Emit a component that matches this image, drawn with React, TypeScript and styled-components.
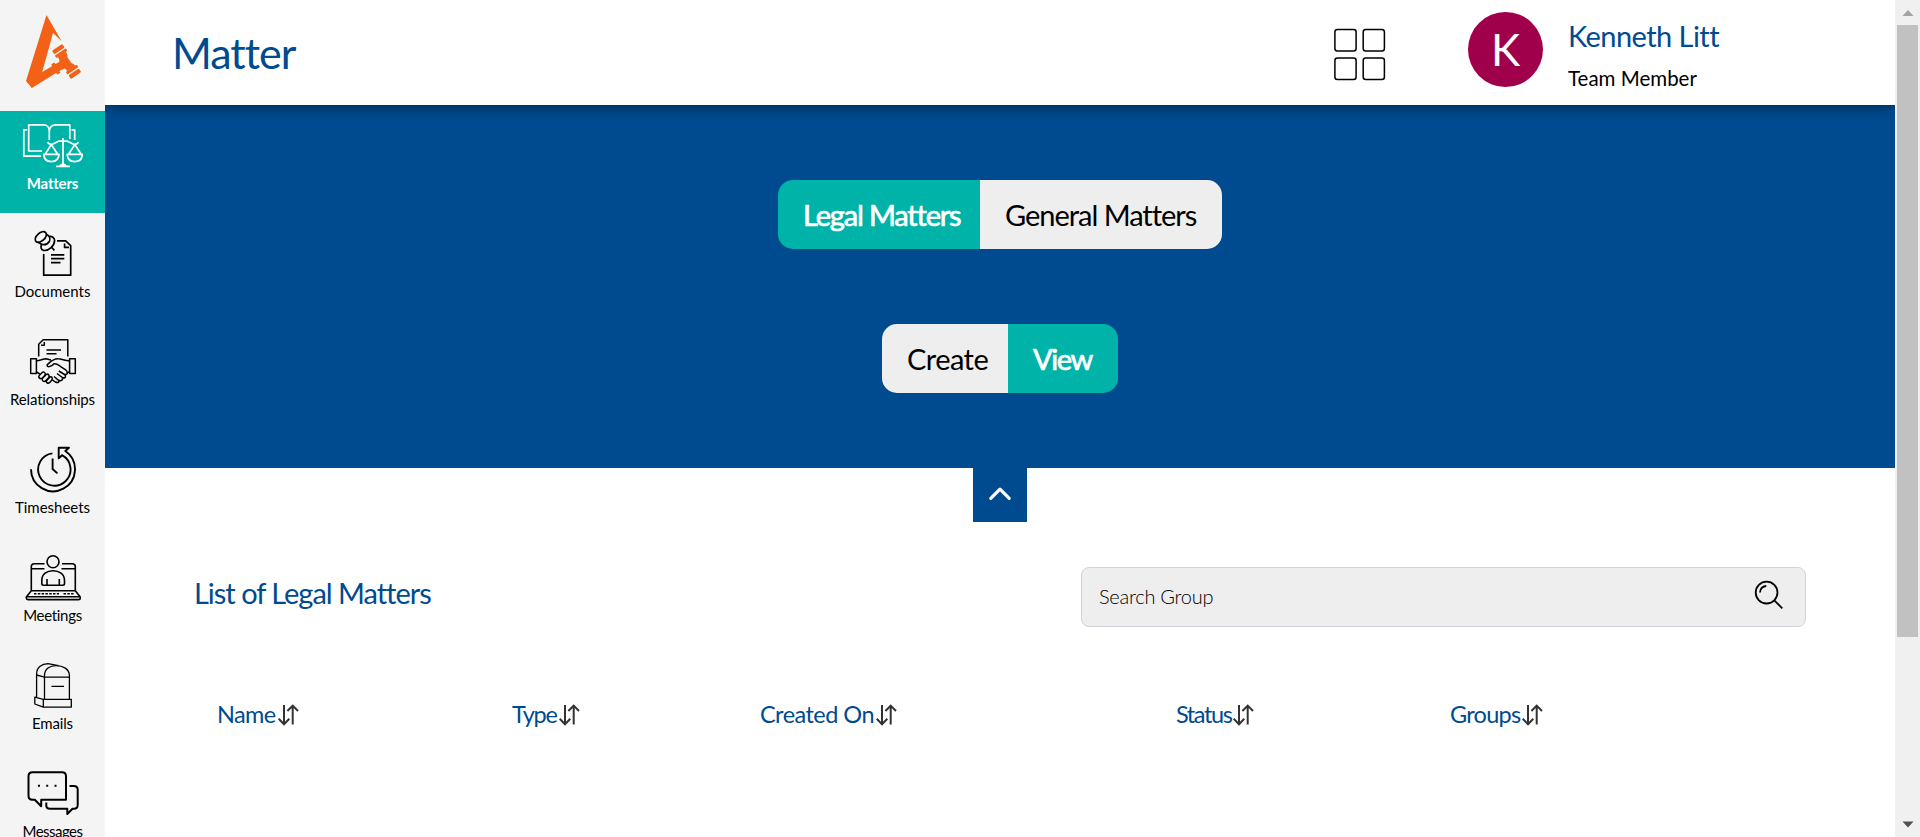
import React from "react";
import styled, { createGlobalStyle, css } from "styled-components";

const NAVY = "#004a8f";
const TEAL = "#00b3a8";

const GlobalStyle = createGlobalStyle`
  * { box-sizing: border-box; }
  body {
    margin: 0;
    background: #fff;
    font-family: Lato, "Open Sans", sans-serif;
    color: #000;
    overflow: hidden;
  }
  svg { display: block; flex: none; }
`;

/* ---------- shell ---------- */

const Shell = styled.div`
  display: flex;
  width: 100%;
  height: 837px;
  overflow: hidden;
`;

const Sidebar = styled.nav`
  flex: none;
  width: 105px;
  background: #f4f4f4;
  overflow: hidden;
`;

const LogoBox = styled.div`
  height: 111px;
  padding: 10px 0 0 20px;
`;

const NavList = styled.div`
  display: flex;
  flex-direction: column;
  gap: 6px;
`;

const NavItem = styled.a<{ $active?: boolean }>`
  display: flex;
  flex: none;
  flex-direction: column;
  align-items: center;
  gap: 2px;
  height: 102px;
  padding-top: 10px;
  color: ${(p) => (p.$active ? "#fff" : "#000")};
  background: ${(p) => (p.$active ? TEAL : "transparent")};
`;

const NavLabel = styled.span<{ $spacing: number; $bold?: boolean }>`
  font-size: 15px;
  line-height: 20px;
  font-weight: ${(p) => (p.$bold ? 700 : 400)};
  letter-spacing: ${(p) => p.$spacing}px;
  white-space: nowrap;
`;

const Main = styled.main`
  flex: 1;
  min-width: 0;
  display: flex;
  flex-direction: column;
`;

/* ---------- header ---------- */

const Header = styled.header`
  position: relative;
  flex: none;
  display: flex;
  height: 105px;
  padding: 0 176px 0 67px;
  background: #fff;
  box-shadow: 0 3px 12px rgba(0, 0, 0, 0.4);
  clip-path: inset(0 0 -16px 0);
`;

const PageTitle = styled.h1`
  flex: 1;
  margin: 0;
  font-size: 43px;
  line-height: 105px;
  font-weight: 400;
  letter-spacing: -1px;
  color: ${NAVY};
`;

const AppsButton = styled.div`
  width: 52px;
  margin: 28px 82px 0 0;
`;

const Avatar = styled.div`
  flex: none;
  width: 75px;
  height: 75px;
  margin-top: 12px;
  border-radius: 50%;
  background: #a0004b;
  color: #fff;
  font-size: 44px;
  line-height: 75px;
  text-align: center;
`;

const UserInfo = styled.div`
  width: 151px;
  margin-left: 25px;
  padding-top: 16px;
  white-space: nowrap;
`;

const UserName = styled.div`
  font-size: 29px;
  line-height: 40px;
  letter-spacing: -0.55px;
  color: ${NAVY};
`;

const UserRole = styled.div`
  font-size: 20.5px;
  line-height: 44px;
`;

/* ---------- hero ---------- */

const Hero = styled.section`
  flex: none;
  display: flex;
  flex-direction: column;
  align-items: center;
  gap: 75px;
  height: 363px;
  padding-top: 75px;
  background: ${NAVY};
`;

const Toggle = styled.div`
  display: flex;
  height: 69px;
  border-radius: 15px;
  overflow: hidden;
`;

const ToggleOption = styled.button<{ $width: number; $spacing: number; $active?: boolean }>`
  width: ${(p) => p.$width}px;
  padding: 0 0 0 25px;
  border: 0;
  font: 400 29px/69px Lato, sans-serif;
  letter-spacing: ${(p) => p.$spacing}px;
  text-align: left;
  white-space: nowrap;
  background: #eee;
  color: #000;
  ${(p) =>
    p.$active &&
    css`
      background: ${TEAL};
      color: #fff;
      -webkit-text-stroke: 0.7px #fff;
    `}
`;

const CollapseTab = styled.button`
  display: flex;
  flex: none;
  align-self: center;
  align-items: center;
  justify-content: center;
  width: 54px;
  height: 54px;
  padding: 0 0 2px;
  border: 0;
  background: ${NAVY};
`;

/* ---------- list ---------- */

const ListBar = styled.div`
  display: flex;
  justify-content: space-between;
  margin-top: 45px;
  padding: 0 89px 0 89px;
`;

const ListTitle = styled.h2`
  margin: 0;
  font-size: 29px;
  line-height: 51px;
  font-weight: 400;
  letter-spacing: -1.02px;
  color: ${NAVY};
`;

const SearchBox = styled.div`
  display: flex;
  justify-content: space-between;
  width: 725px;
  height: 60px;
  padding: 0 21px 0 17px;
  border: 1px solid #cfd4da;
  border-radius: 8px;
  background: #eee;
`;

const Placeholder = styled.span`
  font-size: 20px;
  line-height: 56px;
  font-weight: 300;
  letter-spacing: -0.25px;
`;

const SearchIconBox = styled.div`
  padding-top: 12px;
`;

const TableHead = styled.div`
  display: grid;
  grid-template-columns: 295px 248px 416px 274px 1fr;
  margin: 71px 0 0 112px;
`;

const ColumnHead = styled.div`
  display: flex;
  align-items: flex-start;
  height: 32px;
  color: ${NAVY};
`;

const ColumnLabel = styled.span<{ $spacing: number }>`
  margin-right: 2px;
  font-size: 23.5px;
  line-height: 32px;
  letter-spacing: ${(p) => p.$spacing}px;
  white-space: nowrap;
`;

const SortButton = styled.span`
  padding-top: 6px;
`;

/* ---------- scrollbar ---------- */

const ScrollTrack = styled.div`
  flex: none;
  display: flex;
  flex-direction: column;
  align-items: center;
  width: 25px;
  background: #f0f0f0;
`;

const ScrollThumb = styled.div`
  width: 21px;
  height: 612px;
  background: #c1c1c1;
`;

const ScrollButton = styled.div<{ $end?: boolean }>`
  display: flex;
  justify-content: center;
  height: 25px;
  padding-top: ${(p) => (p.$end ? 9 : 10)}px;
  margin-top: ${(p) => (p.$end ? "auto" : 0)};
`;

/* ---------- drawings ---------- */

const Logo = () => (
  <svg width="64" height="82" viewBox="20 10 64 82" fill="#f26115">
    <path d="M46.5 15 L61.7 41.3 L53 33 L42.2 72 L52 66.2 L51.3 64.2 L54.3 62.4 L55.6 64 L62 60.3 L66 67.5 L59.5 71 L60.3 72.7 L57.5 74.4 L56 73 L31.8 88 L26 81 Z" />
    <g transform="translate(66.6 61.4) rotate(56)">
      <rect x="-17" y="-6.2" width="4.4" height="12.4" rx="1" />
      <rect x="-11.4" y="-6.6" width="3" height="13.2" rx="0.8" />
      <path d="M-8.6 -4.8 L-5 -4.3 L-3 -3 H4 L6 -4.3 L8.6 -4.8 V4.8 L6 5 L4 6 H-4 L-6 5 L-8.6 4.8 Z" />
      <rect x="8.4" y="-6.6" width="3" height="13.2" rx="0.8" />
      <rect x="12.6" y="-6.2" width="4.4" height="12.4" rx="1" />
    </g>
  </svg>
);

const NavSvg = ({ top, width = 1.6, children }: { top: number; width?: number; children: React.ReactNode }) => (
  <svg
    width="61"
    height="50"
    viewBox={`22 ${top} 61 50`}
    fill="none"
    stroke="currentColor"
    strokeWidth={width}
    strokeLinejoin="round"
  >
    {children}
  </svg>
);

const MattersIcon = () => (
  <NavSvg top={121} width={1.7}>
    <path d="M42 151H28.7V124.9H43.5C47 124.9 49.3 127.5 49.3 131V140M49.3 131C49.3 127.5 52 124.9 55.5 124.9H69.8V139" />
    <path d="M27 129.8H23.8V156.2H41M71.5 129.8H74.7V140" />
    <path d="M63 138V166M56 166.3H70M60 166L61.5 164.5H64.5L66 166" />
    <path d="M47.5 142.3Q49 144.8 52.5 144.2L58.5 141.2H67.5L73.5 144.2Q77 144.8 78.5 142.3" />
    <path d="M51.3 144.5L45.3 154M51.3 144.5L57.5 154M74.8 144.5L68.7 154M74.8 144.5L81 154" />
    <path d="M43.7 154.4H59Q58.5 161.6 51.3 161.6T43.7 154.4ZM67.2 154.4H82.3Q82 161.6 74.8 161.6T67.2 154.4Z" />
  </NavSvg>
);

const DocumentsIcon = () => (
  <NavSvg top={229} width={1.7}>
    <path d="M43.7 254V275.2H70.7V245.7L65.7 240.8H57M64.6 243.5V247.4H69" />
    <path d="M51 254.8H64.3M51 258.6H64.3M51 262.6H60.5" />
    <ellipse cx="40.8" cy="237" rx="6.6" ry="4" transform="rotate(-42 40.8 237)" />
    <path d="M47 234.5C49.5 236 50.5 239 49.5 241.2C47.5 244.2 44.5 245.2 42 244.4L37.8 242" />
    <path d="M49 236.6C51.8 236 54.6 237.6 54.6 240.6C54.4 246 48.4 251.2 43.6 250.4C40.8 249.6 40.4 246.8 41.6 244.4" />
    <path d="M51.3 247L54.4 250.4" />
  </NavSvg>
);

const RelationshipsIcon = () => (
  <NavSvg top={337} width={1.5}>
    <path d="M38.7 356.5V344.3L43.2 339.8H67.8V356.5M44.3 342V345.2H41" />
    <path d="M46.5 350H61M46.5 353.7H56.5" />
    <path d="M30.7 358.7H36.4V373.4H30.7ZM69.6 358.7H75.3V373.4H69.6Z" />
    <path d="M36.4 360.8C40 361 42.5 358.8 46 358.8L51 360M69.6 360.8C65 361 62 358.8 58 358.8C53 358.6 50 362.5 47.2 364.7C46.5 367.8 51.5 367 54 363.8C57 363.3 59 365.5 61 366.8L65.7 369.8C68.2 372 67.5 375.3 64.5 374.5L58.8 371" />
    <path d="M36.4 371.8L39.8 374M69.6 371.8L67 373M57 373.5L62.3 377.5C65.5 379 66.5 376 64.5 374.5M54 376.5L58.6 380.3C61.5 381.6 63.4 379.6 62.3 377.5M52.3 379.8L55.3 382C58 383.2 59.8 382 58.6 380.3" />
    <path d="M42.2 372.4L39.2 375.5C37.8 378 40.8 379.6 42.6 377.8L45 375.2C46 372.8 43.8 371.2 42.2 372.4ZM46.3 374.5L42.4 378.6C41.4 381 44 382.2 45.8 380.7L48.8 377.4C49.8 375 47.8 373.4 46.3 374.5ZM50 377L46.5 380.8C45.8 383 48 383.8 49.8 382.4L52 379.8C52.8 377.6 51.4 376.2 50 377Z" />
  </NavSvg>
);

const TimesheetsIcon = () => (
  <NavSvg top={445} width={1.9}>
    <path d="M31 469.3A22 22 0 1 0 65.3 451L69 447.8H58.7V458.4L62 455.2A16.2 16.2 0 1 1 52.4 453.4" />
    <path d="M52.6 458.5V469L57.4 473.4" />
  </NavSvg>
);

const MeetingsIcon = () => (
  <NavSvg top={553} width={1.6}>
    <circle cx="53" cy="561.7" r="6" />
    <path d="M43.5 585.2C42.3 585.2 41.8 584.7 41.8 583.5V580.5C41.8 574 47 570.8 53 570.8S64.5 574 64.5 580.5V583.5C64.5 584.7 64 585.2 62.8 585.2ZM47 579V585M59.3 579V585" />
    <path d="M31.3 590.5V566.5Q31.3 563.7 34.3 563.7H44.5M62 563.7H72.3Q75.3 563.7 75.3 566.5V590.5M31.3 568.7H44.5M61.5 568.7H75.3" />
    <path d="M31.3 590.7H75.3L80.3 597V598Q80.3 599.6 78.5 599.6H28Q26.3 599.6 26.3 598V597ZM26.3 596.8H80.3" />
    <path d="M34 593.7H59M63.5 593.7H74" strokeDasharray="2.5 1.3" />
  </NavSvg>
);

const EmailsIcon = () => (
  <NavSvg top={661} width={1.3}>
    <path d="M44.5 699V675.5C44.5 669 50 665.6 56 665.6C63 665.6 69.4 669 69.4 675.5V699" />
    <path d="M36.6 697.4V674C36.6 667.5 42 663.6 48 663.6L58.5 665.7M36.6 675L44.5 677.2H69.4" />
    <path d="M43.3 699.3H71.3V707.2H43.3ZM43.3 699.3L34.8 697.2V704L43.3 707.2M34.8 697.2H36.6M51.5 686.4H64" />
  </NavSvg>
);

const MessagesIcon = () => (
  <NavSvg top={769} width={2}>
    <path d="M32.5 772.2H62Q66 772.2 66 776.2V799.7H41.2V806.2L34.8 799.7H32.5Q28.5 799.7 28.5 795.7V776.2Q28.5 772.2 32.5 772.2Z" />
    <path d="M69.5 786H73.8Q77.7 786 77.7 789.5V805Q77.7 808.7 74 808.7H72.5L67.3 814V808.7H50Q46.3 808.7 46.3 805.5V802.5" />
    <path d="M38 785.7H40M46.2 785.7H48.2M54.5 785.7H56.5" />
  </NavSvg>
);

const AppsIcon = () => (
  <svg width="52" height="53" viewBox="0 0 52 53" fill="none" stroke="#000" strokeWidth="1.5">
    <rect x="0.9" y="1.4" width="21.2" height="21.6" rx="2.5" />
    <rect x="29.2" y="1.4" width="21.2" height="21.6" rx="2.5" />
    <rect x="0.9" y="30" width="21.2" height="21.6" rx="2.5" />
    <rect x="29.2" y="30" width="21.2" height="21.6" rx="2.5" />
  </svg>
);

const ChevronUpIcon = () => (
  <svg width="24" height="16" viewBox="0 0 24 16" fill="none" stroke="#fff" strokeWidth="3.2" strokeLinecap="round" strokeLinejoin="round">
    <path d="M2.8 12.3L12 3.1L21.2 12.3" />
  </svg>
);

const SearchIcon = () => (
  <svg width="30" height="30" viewBox="0 0 30 30" fill="none" stroke="#000" strokeWidth="1.8">
    <circle cx="12.6" cy="12.6" r="10.9" />
    <path d="M20.3 20.3L28.3 28.3" />
    <path d="M6 12.6C6 8.5 9 6 12.3 6" />
  </svg>
);

const SortIcon = () => (
  <svg width="21" height="22" viewBox="0 0 21 22" fill="none" stroke="#333" strokeWidth="2">
    <path d="M6 1V20M0.7 14.8L6 20.2L11.3 14.8" />
    <path d="M14.7 20.5V1.5M9.4 7L14.7 1.6L20 7" />
  </svg>
);

const TriangleIcon = ({ down }: { down?: boolean }) => (
  <svg width="12" height="7" viewBox="0 0 12 7">
    {down ? <path d="M0.5 0.5H11.5L6 6.5Z" fill="#505050" /> : <path d="M0.5 6H11.5L6 0Z" fill="#a3a3a3" />}
  </svg>
);

/* ---------- data ---------- */

const navItems = [
  { label: "Matters", Icon: MattersIcon, spacing: -0.2, active: true },
  { label: "Documents", Icon: DocumentsIcon, spacing: 0.03 },
  { label: "Relationships", Icon: RelationshipsIcon, spacing: -0.16 },
  { label: "Timesheets", Icon: TimesheetsIcon, spacing: -0.02 },
  { label: "Meetings", Icon: MeetingsIcon, spacing: -0.3 },
  { label: "Emails", Icon: EmailsIcon, spacing: -0.18 },
  { label: "Messages", Icon: MessagesIcon, spacing: -0.52 },
];

const columns = [
  { label: "Name", spacing: -0.6 },
  { label: "Type", spacing: -1.2 },
  { label: "Created On", spacing: -0.53 },
  { label: "Status", spacing: -1.4 },
  { label: "Groups", spacing: -0.75 },
];

export default function App() {
  return (
    <>
      <GlobalStyle />
      <Shell>
        <Sidebar>
          <LogoBox>
            <Logo />
          </LogoBox>
          <NavList>
            {navItems.map(({ label, Icon, spacing, active }) => (
              <NavItem key={label} $active={active}>
                <Icon />
                <NavLabel $spacing={spacing} $bold={active}>
                  {label}
                </NavLabel>
              </NavItem>
            ))}
          </NavList>
        </Sidebar>
        <Main>
          <Header>
            <PageTitle>Matter</PageTitle>
            <AppsButton>
              <AppsIcon />
            </AppsButton>
            <Avatar>K</Avatar>
            <UserInfo>
              <UserName>Kenneth Litt</UserName>
              <UserRole>Team Member</UserRole>
            </UserInfo>
          </Header>
          <Hero>
            <Toggle>
              <ToggleOption $width={202} $spacing={-1.17} $active>
                Legal Matters
              </ToggleOption>
              <ToggleOption $width={242} $spacing={-1.02}>
                General Matters
              </ToggleOption>
            </Toggle>
            <Toggle>
              <ToggleOption $width={126} $spacing={-0.54}>
                Create
              </ToggleOption>
              <ToggleOption $width={110} $spacing={-1.4} $active>
                View
              </ToggleOption>
            </Toggle>
          </Hero>
          <CollapseTab>
            <ChevronUpIcon />
          </CollapseTab>
          <ListBar>
            <ListTitle>List of Legal Matters</ListTitle>
            <SearchBox>
              <Placeholder>Search Group</Placeholder>
              <SearchIconBox>
                <SearchIcon />
              </SearchIconBox>
            </SearchBox>
          </ListBar>
          <TableHead>
            {columns.map(({ label, spacing }) => (
              <ColumnHead key={label}>
                <ColumnLabel $spacing={spacing}>{label}</ColumnLabel>
                <SortButton>
                  <SortIcon />
                </SortButton>
              </ColumnHead>
            ))}
          </TableHead>
        </Main>
        <ScrollTrack>
          <ScrollButton>
            <TriangleIcon />
          </ScrollButton>
          <ScrollThumb />
          <ScrollButton $end>
            <TriangleIcon down />
          </ScrollButton>
        </ScrollTrack>
      </Shell>
    </>
  );
}
